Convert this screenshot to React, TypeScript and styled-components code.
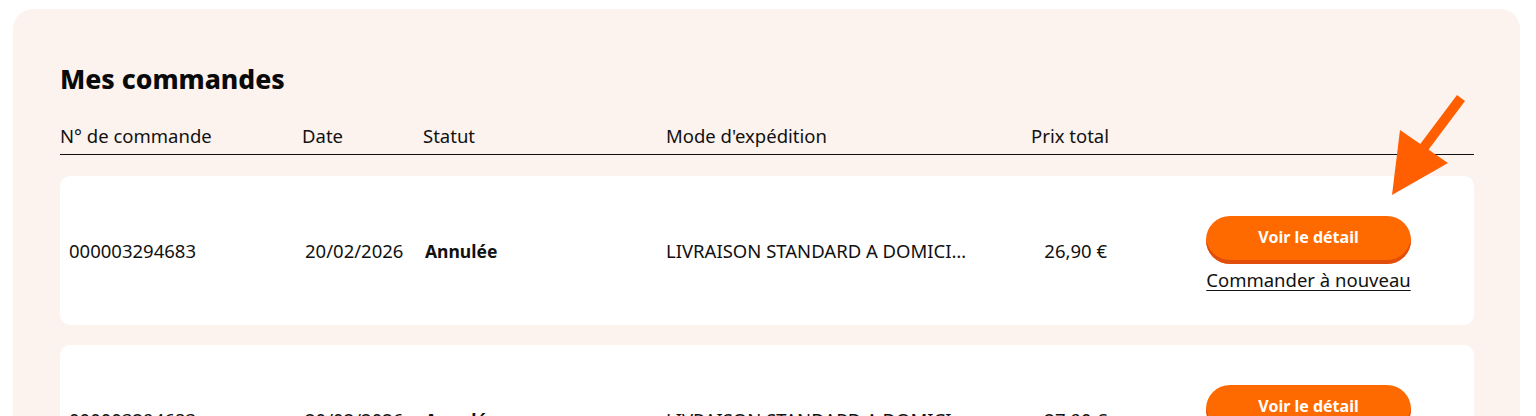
import React from "react";
import styled, { createGlobalStyle } from "styled-components";

const GlobalStyle = createGlobalStyle`
  html, body { margin: 0; padding: 0; background: #ffffff; }
  body { font-family: "Noto Sans", Lato, Arial, sans-serif; color: #111; }
  * { box-sizing: border-box; }
`;

const Page = styled.div`
  padding: 9px 16px 0 13px;
  height: 416px;
  overflow: hidden;
`;

const Panel = styled.section`
  position: relative;
  background: #fcf3ef;
  border-radius: 20px;
  padding: 52px 46px 40px 47px;
`;

const Title = styled.h1`
  margin: 0 0 20px;
  font-size: 26.5px;
  font-weight: 800;
  line-height: 36px;
  color: #0a0a0a;
`;

const columns = `242px 121px 243px 330px 113px 1fr`;

const HeaderRow = styled.div`
  display: grid;
  grid-template-columns: ${columns};
  align-items: center;
  height: 38px;
  border-bottom: 1px solid #111;
  font-size: 18.5px;
`;

const HeaderCell = styled.div<{ $right?: boolean }>`
  text-align: ${(p) => (p.$right ? "right" : "left")};
`;

const List = styled.div`
  display: flex;
  flex-direction: column;
  gap: 20px;
  margin-top: 21px;
`;

const OrderCard = styled.div`
  display: grid;
  grid-template-columns: ${columns};
  align-items: center;
  height: 149px;
  background: #ffffff;
  border-radius: 10px;
  font-size: 18.5px;
`;

const Cell = styled.div<{ $pad?: number; $bold?: boolean; $right?: boolean; $clip?: number }>`
  padding-left: ${(p) => p.$pad ?? 0}px;
  font-weight: ${(p) => (p.$bold ? 700 : 400)};
  font-size: ${(p) => (p.$bold ? "17.5px" : "inherit")};
  text-align: ${(p) => (p.$right ? "right" : "left")};
  padding-right: ${(p) => (p.$right ? 2 : 0)}px;
  max-width: ${(p) => (p.$clip ? `${p.$clip}px` : "none")};
  white-space: nowrap;
  overflow: hidden;
  text-overflow: ellipsis;
`;

const Actions = styled.div`
  display: flex;
  flex-direction: column;
  align-items: flex-end;
  padding-right: 63px;
  padding-top: 6px;
`;

const ActionStack = styled.div`
  display: flex;
  flex-direction: column;
  align-items: center;
  gap: 4px;
  width: 205px;
`;

const DetailButton = styled.button`
  width: 205px;
  height: 48px;
  border: none;
  border-radius: 24px;
  background: #ff6a00;
  box-shadow: inset 0 -4px 0 #e14e0c;
  color: #fff;
  font-family: inherit;
  font-size: 16px;
  font-weight: 700;
  padding-bottom: 6px;
  cursor: pointer;
`;

const ReorderLink = styled.a`
  color: #111;
  font-size: 18.5px;
  text-decoration: underline;
  text-underline-offset: 3px;
  line-height: 24px;
  white-space: nowrap;
`;

const Pointer = styled.svg`
  position: absolute;
  left: 1366px;
  top: 75px;
  width: 100px;
  height: 120px;
  pointer-events: none;
`;

type Order = {
  id: string;
  date: string;
  status: string;
  shipping: string;
  total: string;
};

const orders: Order[] = [
  { id: "000003294683", date: "20/02/2026", status: "Annulée", shipping: "LIVRAISON STANDARD A DOMICILE", total: "26,90 €" },
  { id: "000003294683", date: "20/02/2026", status: "Annulée", shipping: "LIVRAISON STANDARD A DOMICILE", total: "27,90 €" },
];

export default function App() {
  return (
    <>
      <GlobalStyle />
      <Page>
        <Panel>
          <Title>Mes commandes</Title>
          <HeaderRow>
            <HeaderCell>N° de commande</HeaderCell>
            <HeaderCell>Date</HeaderCell>
            <HeaderCell>Statut</HeaderCell>
            <HeaderCell>Mode d'expédition</HeaderCell>
            <HeaderCell $right>Prix total</HeaderCell>
            <HeaderCell />
          </HeaderRow>
          <List>
            {orders.map((o, i) => (
              <OrderCard key={i}>
                <Cell $pad={9}>{o.id}</Cell>
                <Cell $pad={3}>{o.date}</Cell>
                <Cell $pad={2} $bold>{o.status}</Cell>
                <Cell $clip={304}>{o.shipping}</Cell>
                <Cell $right>{o.total}</Cell>
                <Actions>
                  <ActionStack>
                    <DetailButton>Voir le détail</DetailButton>
                    <ReorderLink href="#">Commander à nouveau</ReorderLink>
                  </ActionStack>
                </Actions>
              </OrderCard>
            ))}
          </List>
          <Pointer viewBox="0 0 100 120">
            <line x1="82" y1="14" x2="40" y2="70" stroke="#ff5f00" strokeWidth="10" />
            <polygon points="21,46 69,79 13,111" fill="#ff5f00" />
          </Pointer>
        </Panel>
      </Page>
    </>
  );
}
